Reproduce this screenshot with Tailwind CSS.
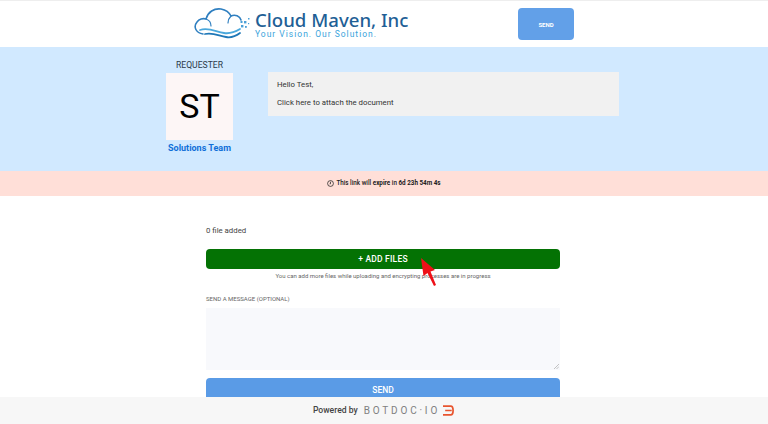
<!DOCTYPE html>
<html lang="en">
  <head>
    <meta charset="UTF-8" />
    <title>Botdoc</title>
    <script src="https://cdn.jsdelivr.net/npm/@tailwindcss/browser@4"></script>
  </head>
  <body class="relative h-[424px] w-[768px] overflow-hidden bg-white font-['Roboto',sans-serif] text-[#222]">
    <!-- header -->
    <header class="flex h-[47px] items-center border-t border-[#eeeeee] bg-white pl-[194px]">
      <div class="flex w-[324px] items-center">
        <svg class="h-[32px] w-[60px] shrink-0" viewBox="0 0 60 32" fill="none" stroke-linecap="round">
          <path d="M9 26C2 25 -1 19 3 14C5 11 9 10 12 11C14 4 20 0 27 1C32 2 35 4 37 8C41 6 46 8 47 12" stroke="#2f7fc0" stroke-width="1.6" />
          <path d="M12 11C15 12 17 15 17 18M37 8C35 10 34 12 34 15" stroke="#2f7fc0" stroke-width="1.2" />
          <path d="M6 22C15 19 22 24 30 25C36 26 41 24 46 21" stroke="#4aa8dc" stroke-width="1.8" />
          <path d="M11 26C19 24 25 28 32 29C37 30 42 28 46 25" stroke="#1f78b8" stroke-width="1.8" />
          <g fill="#4aa0d8" stroke="none">
            <rect x="47" y="17" width="2.4" height="2.4" />
            <rect x="50" y="13" width="2.4" height="2.4" />
            <rect x="46.500" y="13" width="2" height="2" />
            <rect x="51" y="18" width="1.800" height="1.800" />
            <rect x="54" y="10" width="1.500" height="1.500" />
            <rect x="54" y="15" width="1.200" height="1.200" />
          </g>
        </svg>
        <div class="ml-px flex flex-col pt-px">
          <span class="font-['Noto_Sans',sans-serif] text-[18.600px] leading-[18px] font-medium whitespace-nowrap text-[#1f5f96]">Cloud Maven, Inc</span>
          <span class="mt-px text-[8.500px] leading-[8px] tracking-[1px] whitespace-nowrap text-[#3ba4dc]">Your Vision. Our Solution.</span>
        </div>
      </div>
      <button class="h-8 w-14 rounded-sm bg-[#62a0e8] text-[6px] font-bold text-white">SEND</button>
    </header>

    <!-- requester band -->
    <section class="flex h-[124px] bg-[#d1e9ff] pl-[166px]">
      <div class="flex w-[67px] flex-col items-center pt-[13px]">
        <div class="text-[8.600px] leading-[10px] whitespace-nowrap text-[#2b3a4a]">REQUESTER</div>
        <div class="mt-[3px] flex h-[67px] w-[67px] items-center justify-center bg-[#fdf6f6] text-[34px] text-black">ST</div>
        <div class="mt-[3px] text-[9px] leading-[10px] font-bold whitespace-nowrap text-[#0f6fd8]">Solutions Team</div>
      </div>
      <div class="mt-[25px] ml-[35px] h-[44px] w-[351px] bg-[#f1f1f1] px-[9px] pt-[7px] text-[7.800px] leading-[12px] text-[#333]">
        <p>Hello Test,</p>
        <p class="mt-[6px]">Click here to attach the document</p>
      </div>
    </section>

    <!-- expire band -->
    <section class="flex h-[25px] items-center justify-center gap-[2px] bg-[#ffdfd8] text-[6.300px] text-[#222]">
      <svg class="h-[7px] w-[7px]" viewBox="0 0 12 12" fill="none" stroke="#222" stroke-width="1.3">
        <circle cx="6" cy="6" r="5" />
        <path d="M6 3v3.500h-1.500" />
      </svg>
      <span class="font-medium">This link will <b>expire</b> in <b>6d 23h 54m 4s</b></span>
    </section>

    <!-- upload form -->
    <main class="ml-[206px] w-[354px] pt-[30px]">
      <div class="text-[7.800px] leading-[10px] text-[#444]">0 file added</div>
      <button class="mt-[13px] block h-5 w-full rounded-sm bg-[#047204] text-[8.500px] font-medium tracking-[0.2px] text-white">+ ADD FILES</button>
      <p class="mt-[3px] text-center text-[6px] leading-[8px] text-[#666]">You can add more files while uploading and encrypting processes are in progress</p>
      <label class="mt-[15px] block text-[6px] leading-[8px] text-[#666]">SEND A MESSAGE (OPTIONAL)</label>
      <div class="relative mt-[5px] h-[62px]">
        <textarea class="block h-full w-full resize-none bg-[#f8f9fc] outline-none"></textarea>
        <svg class="absolute right-px bottom-px h-[5px] w-[5px]" viewBox="0 0 5 5" stroke="#aaaaaa" stroke-width="0.7">
          <path d="M0 5L5 0M2.500 5L5 2.500" />
        </svg>
      </div>
      <button class="mt-2 block h-6 w-full rounded-sm bg-[#5a9be6] text-[8.500px] font-medium text-white">SEND</button>
    </main>

    <!-- red pointer arrow -->
    <svg class="absolute top-[257px] left-[420px] h-[30px] w-[18px]" viewBox="0 0 18 30" fill="none">
      <path d="M1 1L15 13L10.500 14.500L16 28L14 29L7.500 16L3.500 19Z" fill="#ee1018" />
    </svg>

    <!-- footer -->
    <footer class="absolute right-0 bottom-0 left-0 flex h-[27px] items-center justify-center bg-[#f7f7f7]">
      <span class="text-[8.600px] font-medium text-[#444]">Powered by</span>
      <span class="ml-[6px] text-[10px] tracking-[2.800px] text-[#808080]">BOTDOC·IO</span>
      <svg class="ml-[3px] h-[11px] w-[12px]" viewBox="0 0 11 10" fill="none" stroke="#e8552f" stroke-width="1.6">
        <path d="M0 1H7C10 1 10 9 7 9H0M2 5H8" />
      </svg>
    </footer>
  </body>
</html>
